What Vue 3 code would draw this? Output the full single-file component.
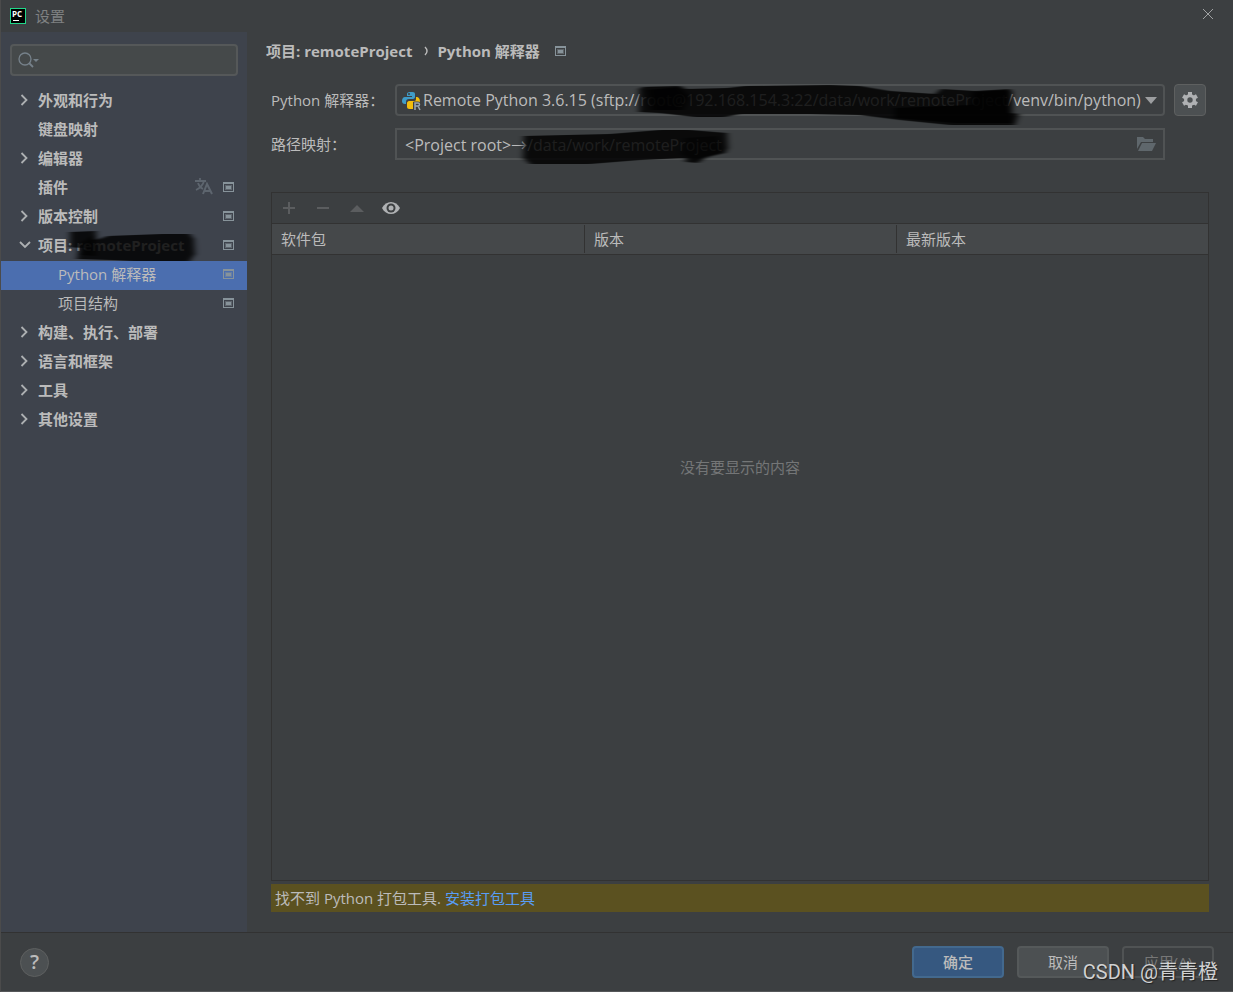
<script setup>
import { ref } from "vue"

const search = ref("")
const selected = ref("interpreter")
const interpreter = ref("remote")
const mapping = ref("<Project root>→/data/work/remoteProject")

const items = ref([
  { id: "look", text: "外观和行为", arrow: "right" },
  { id: "keymap", text: "键盘映射" },
  { id: "editor", text: "编辑器", arrow: "right" },
  { id: "plugins", text: "插件", translate: true, badge: true },
  { id: "vcs", text: "版本控制", arrow: "right", badge: true },
  { id: "project", text: "项目: remoteProject", arrow: "down", badge: true, hidden: true },
  { id: "interpreter", text: "Python 解释器", child: true, badge: true },
  { id: "structure", text: "项目结构", child: true, badge: true },
  { id: "build", text: "构建、执行、部署", arrow: "right" },
  { id: "lang", text: "语言和框架", arrow: "right" },
  { id: "tools", text: "工具", arrow: "right" },
  { id: "other", text: "其他设置", arrow: "right" }
])

const columns = ["软件包", "版本", "最新版本"]
</script>

<template>
  <div class="window">
    <header class="title-bar">
      <svg class="logo" width="16" height="16" viewBox="0 0 16 16">
        <rect width="16" height="16" fill="#21d789" />
        <rect x="1" y="1" width="14" height="14" fill="#000" />
        <text x="2" y="9" font-size="8" font-weight="700" fill="#fff">PC</text>
        <rect x="3" y="12" width="6" height="1" fill="#fff" />
      </svg>
      <span class="title">设置</span>
      <button class="close" aria-label="关闭">
        <svg width="12" height="12" viewBox="0 0 12 12">
          <path d="M1 1L11 11M11 1L1 11" stroke="#a0a2a3" fill="none" />
        </svg>
      </button>
    </header>

    <div class="content">
      <aside class="sidebar">
        <div class="search">
          <svg width="22" height="16" viewBox="0 0 22 16">
            <circle cx="7" cy="7" r="6" fill="none" stroke="#76818a" stroke-width="1.3" />
            <path d="M11 11L15 15" stroke="#76818a" stroke-width="1.8" />
            <path d="M15 7H21L18 10Z" fill="#76818a" />
          </svg>
          <input v-model="search" type="text" aria-label="搜索">
        </div>

        <nav>
          <a v-for="item in items" :key="item.id" href="#" class="item"
            :class="{ child: item.child, active: selected == item.id }" @click.prevent="selected = item.id">
            <span class="arrow">
              <svg v-if="item.arrow == 'right'" width="12" height="12" viewBox="0 0 12 12">
                <path d="M2.500 1L7.500 6L2.500 11" fill="none" stroke="#adb0b2" stroke-width="1.8" />
              </svg>
              <svg v-if="item.arrow == 'down'" width="12" height="12" viewBox="0 0 12 12">
                <path d="M1 3L6 8L11 3" fill="none" stroke="#adb0b2" stroke-width="1.8" />
              </svg>
            </span>
            <span class="name">{{ item.text }}</span>
            <svg v-if="item.translate" class="translate" width="18" height="17" viewBox="0 0 18 17">
              <path d="M0 3H11M5 0V3M9 3C8 7 5 10 1 12M3 5C4 8 6 10 8 11" fill="none" stroke="#5d656e" stroke-width="1.8" />
              <path d="M8 16L12 6L17 16M10 13H15" fill="none" stroke="#5d656e" stroke-width="2" />
            </svg>
            <svg v-if="item.badge" width="11" height="10" viewBox="0 0 11 10">
              <path d="M0 0H11V10H0ZM1 2V9H10V2Z" fill="#87939a" fill-rule="evenodd" />
              <rect x="2" y="3" width="7" height="5" fill="#87939a" fill-opacity=".45" />
              <rect x="3" y="4" width="5" height="3" fill="#87939a" />
            </svg>
            <svg v-if="item.hidden" class="scribble" width="140" height="34" viewBox="0 0 140 34">
              <defs>
                <filter id="soft" x="-10%" width="120%" y="-10%" height="120%">
                  <feGaussianBlur stdDeviation="3 0" />
                </filter>
              </defs>
              <g filter="url(#soft)">
                <path d="M8 2L34 1V10L46 6L100 4H128L132 9L133 24L128 31H72L50 30L15 29L17 18L8 17Z" fill="#030405" fill-opacity=".83" />
                <path d="M20 12L34 4V26L18 25Z" fill="#000" fill-opacity=".6" />
              </g>
            </svg>
          </a>
        </nav>
      </aside>

      <main>
        <h1>
          <span>项目: remoteProject</span>
          <svg class="crumb" width="6" height="10" viewBox="0 0 6 10">
            <path d="M1 1Q5 5 1 9" fill="none" stroke="#bbb" stroke-width="1.4" />
          </svg>
          <span>Python 解释器</span>
          <svg class="crumb-badge" width="11" height="10" viewBox="0 0 11 10">
            <path d="M0 0H11V10H0ZM1 2V9H10V2Z" fill="#87939a" fill-rule="evenodd" />
            <rect x="2" y="3" width="7" height="5" fill="#87939a" fill-opacity=".45" />
            <rect x="3" y="4" width="5" height="3" fill="#87939a" />
          </svg>
        </h1>

        <div class="row">
          <label for="interpreter">Python 解释器：</label>
          <div class="field">
            <svg class="python" width="20" height="20" viewBox="0 0 20 20">
              <path d="M9 1C5 1 5 2 5 4V5H10V6H3C1 6 0 8 0 10C0 12 1 13 3 13H4V11C4 9 5 8 7 8H11C12 8 13 7 13 6V3C13 1 11 1 9 1Z" fill="#3f9cc8" />
              <path d="M14 6V8C14 10 13 10 11 10H7C6 10 5 11 5 12V16C5 18 7 18 9 18H11V11H18C18 8 17 6 14 6Z" fill="#f2bd0c" />
              <circle cx="7" cy="3" r="1" fill="#3c3f41" />
              <path d="M13 19V12H16C18 12 18 15 16 15H13M16 15L18 19" fill="none" stroke="#3c3f41" stroke-width="3" />
              <path d="M13 19V12H16C18 12 18 15 16 15H13M16 15L18 19" fill="none" stroke="#9aa7b0" stroke-width="1.5" />
            </svg>
            <select id="interpreter" v-model="interpreter">
              <option value="remote">Remote Python 3.6.15 (sftp://root@192.168.154.3:22/data/work/remoteProject/venv/bin/python)</option>
            </select>
            <svg class="caret" width="12" height="7" viewBox="0 0 12 7">
              <path d="M0 0H12L6 7Z" fill="#9c9ea0" />
            </svg>
            <svg class="marker" width="640" height="44" viewBox="0 0 640 44">
              <g filter="url(#soft)">
                <path d="M244 5L248 3L285 2L291 5L333 4L350 2L435 1L465 2L495 7L540 10L546 5L580 7L615 5L617 8V29L624 30L620 41H555L505 36L465 31L415 30H345L330 33H300L265 29L244 28Z" fill="#020303" fill-opacity=".84" />
                <path d="M252 6L285 3L294 12L288 26L256 26Z" fill="#000" fill-opacity=".75" />
                <path d="M500 24L575 21L578 8L615 6L618 39H560L500 34Z" fill="#000" fill-opacity=".8" />
              </g>
            </svg>
          </div>
          <button class="gear" aria-label="设置解释器">
            <svg width="16" height="16" viewBox="0 0 16 16">
              <g fill="#afb1b3">
                <circle cx="8" cy="8" r="6" />
                <rect x="6" y="0" width="4" height="16" />
                <rect x="6" y="0" width="4" height="16" transform="rotate(60 8 8)" />
                <rect x="6" y="0" width="4" height="16" transform="rotate(120 8 8)" />
              </g>
              <circle cx="8" cy="8" r="2.700" fill="#4c5052" />
            </svg>
          </button>
        </div>

        <div class="row">
          <label for="mapping">路径映射：</label>
          <div class="field">
            <input id="mapping" v-model="mapping" type="text" readonly>
            <svg class="folder" width="19" height="15" viewBox="0 0 19 15">
              <path d="M0 12V0H6L8 2H16V5H4Z" fill="#5f676c" />
              <path d="M5 6H19L15 14H1Z" fill="#5f676c" />
            </svg>
            <svg class="marker" width="640" height="44" viewBox="0 0 640 44">
              <g filter="url(#soft)">
                <path d="M129 8L215 6L265 2H295L332 5L333 20L330 25L312 29L303 35L291 34L290 30L245 32L195 36H135L128 30Z" fill="#020303" fill-opacity=".84" />
                <path d="M290 10L322 8L330 24L300 33L286 26Z" fill="#000" fill-opacity=".5" />
              </g>
            </svg>
          </div>
          <span class="spacer"></span>
        </div>

        <section class="packages">
          <div class="toolbar">
            <button aria-label="添加" disabled>
              <svg width="14" height="14" viewBox="0 0 14 14">
                <path d="M7 1V13M1 7H13" stroke="#5b5d5f" stroke-width="2" />
              </svg>
            </button>
            <button aria-label="移除" disabled>
              <svg width="14" height="14" viewBox="0 0 14 14">
                <path d="M1 7H13" stroke="#5b5d5f" stroke-width="2" />
              </svg>
            </button>
            <button aria-label="升级" disabled>
              <svg width="14" height="14" viewBox="0 0 14 14">
                <path d="M0 11L7 4L14 11Z" fill="#5b5d5f" />
              </svg>
            </button>
            <button aria-label="显示早期版本">
              <svg width="18" height="14" viewBox="0 0 18 14">
                <path d="M0 7C4 -1 14 -1 18 7C14 15 4 15 0 7Z" fill="#afb1b3" />
                <circle cx="9" cy="7" r="4.500" fill="#3c3f41" />
                <circle cx="9" cy="7" r="2.500" fill="#afb1b3" />
              </svg>
            </button>
          </div>
          <table>
            <thead>
              <tr>
                <th v-for="column in columns" :key="column"><span>{{ column }}</span></th>
              </tr>
            </thead>
          </table>
          <p class="empty">没有要显示的内容</p>
        </section>

        <p class="warning">找不到 Python 打包工具. <a href="#">安装打包工具</a></p>
      </main>
    </div>

    <footer>
      <button class="help" aria-label="帮助">?</button>
      <div class="buttons">
        <button class="primary">确定</button>
        <button>取消</button>
        <button disabled>应用(A)</button>
      </div>
      <span class="watermark">CSDN @青青橙</span>
    </footer>
  </div>
</template>

<style>
body {
  background-color: #3c3f41;
}
</style>

<style scoped>
* {
  box-sizing: border-box;
}

.window {
  min-height: 100vh;
  display: flex;
  flex-direction: column;
  background-color: #3c3f41;
  border-left: 1px solid #4b4b4b;
  border-bottom: 1px solid #555759;
  color: #bbbbbb;
  font-family: "Open Sans", "Noto Sans CJK SC", sans-serif;
  font-size: 15px;
  line-height: 20px;
}

button,
input,
select {
  font: inherit;
  color: inherit;
}

button {
  padding: 0;
  border: none;
  background: none;
}

svg {
  display: block;
  flex-shrink: 0;
}

.title-bar {
  height: 32px;
  display: flex;
  align-items: center;
  gap: 9px;
  padding: 0 19px 0 9px;
}

.title {
  color: #7f8182;
}

.close {
  margin-left: auto;
  padding-bottom: 4px;
}

.content {
  flex: 1;
  display: flex;
}

.sidebar {
  width: 246px;
  flex-shrink: 0;
  background-color: #3e434c;
  padding-top: 12px;
}

.search {
  height: 32px;
  margin: 0 9px 11px;
  padding: 0 8px 0 6px;
  display: flex;
  align-items: center;
  gap: 4px;
  border: 2px solid #555859;
  border-radius: 4px;
  background-color: #45494a;
}

.search input {
  flex: 1;
  min-width: 0;
  border: none;
  outline: none;
  background: none;
}

.item {
  position: relative;
  height: 29px;
  display: flex;
  align-items: center;
  padding: 0 13px 4px 18px;
  color: #bbbbbb;
  font-weight: 700;
  text-decoration: none;
}

.item.child {
  padding-left: 38px;
  font-weight: 400;
}

.item.active {
  background-color: #4b6eaf;
}

.arrow {
  width: 19px;
}

.name {
  flex: 1;
  white-space: nowrap;
}

.translate {
  margin-right: 10px;
}

.scribble {
  position: absolute;
  left: 61px;
  top: -2px;
  pointer-events: none;
}

main {
  flex: 1;
  min-width: 0;
  display: flex;
  flex-direction: column;
  padding: 9px 24px 20px;
}

h1 {
  display: flex;
  align-items: center;
  margin: 0 0 23px -5px;
  font-size: 15px;
  font-weight: 700;
}

.crumb {
  margin: 0 7px 0 12px;
}

.crumb-badge {
  margin-left: 15px;
}

.row {
  display: flex;
  align-items: center;
  margin-bottom: 12px;
  padding-right: 3px;
}

.row label {
  width: 124px;
  flex-shrink: 0;
  white-space: nowrap;
}

.field {
  position: relative;
  flex: 1;
  min-width: 0;
}

.field select,
.field input {
  display: block;
  width: 100%;
  height: 32px;
  padding: 0 20px 0 26px;
  border: 2px solid #505354;
  border-radius: 4px;
  outline: none;
  appearance: none;
  background-color: #3c3f41;
  font-size: 16px;
}

.field input {
  padding: 0 32px 0 8px;
  border-radius: 0;
}

.python {
  position: absolute;
  left: 7px;
  top: 7px;
}

.caret {
  position: absolute;
  right: 8px;
  top: 13px;
}

.folder {
  position: absolute;
  right: 9px;
  top: 9px;
}

.marker {
  position: absolute;
  left: 0;
  top: 0;
  pointer-events: none;
}

.gear,
.spacer {
  width: 32px;
  height: 32px;
  margin-left: 9px;
}

.gear {
  display: flex;
  align-items: center;
  justify-content: center;
  border: 1px solid #5e6060;
  border-radius: 4px;
  background-color: #4c5052;
}

.packages {
  flex: 1;
  margin-top: 20px;
  border: 1px solid #323232;
}

.toolbar {
  height: 31px;
  display: flex;
  align-items: center;
  gap: 20px;
  padding-left: 10px;
  border-bottom: 1px solid #323232;
}

.toolbar button:last-child {
  margin-left: -2px;
}

table {
  width: 100%;
  table-layout: fixed;
  border-collapse: collapse;
  background-color: #45484a;
  border-bottom: 1px solid #323232;
}

th {
  height: 30px;
  padding: 0;
  text-align: left;
  font-weight: 400;
}

th span {
  display: block;
  padding: 4px 9px;
}

th + th span {
  border-left: 1px solid #323232;
}

.empty {
  margin: 0;
  padding-top: 202px;
  text-align: center;
  color: #747677;
}

.warning {
  margin: 3px 0 0;
  padding: 4px;
  background-color: #5b5120;
}

.warning a {
  color: #589df6;
  text-decoration: none;
}

footer {
  position: relative;
  height: 59px;
  display: flex;
  align-items: center;
  justify-content: space-between;
  padding: 0 19px;
  border-top: 1px solid #323232;
}

.help {
  width: 29px;
  height: 29px;
  border: 1px solid #5e6060;
  border-radius: 50%;
  background-color: #4c5052;
  font-size: 20px;
  font-weight: 600;
}

.buttons {
  display: flex;
  gap: 13px;
}

.buttons button {
  width: 92px;
  height: 32px;
  border: 2px solid #55595a;
  border-radius: 4px;
  background-color: #4c5052;
}

.buttons .primary {
  border-color: #43698e;
  background-color: #365880;
  font-weight: 500;
}

.buttons button:disabled {
  border-color: #505354;
  background-color: #3c3f41;
  color: #777777;
}

.watermark {
  position: absolute;
  right: 15px;
  bottom: 4px;
  font-family: Roboto, "Noto Sans CJK SC", sans-serif;
  font-size: 20px;
  line-height: 30px;
  color: #d0d1d2;
  text-shadow: 1px 1px 1px #222222;
  pointer-events: none;
}
</style>
